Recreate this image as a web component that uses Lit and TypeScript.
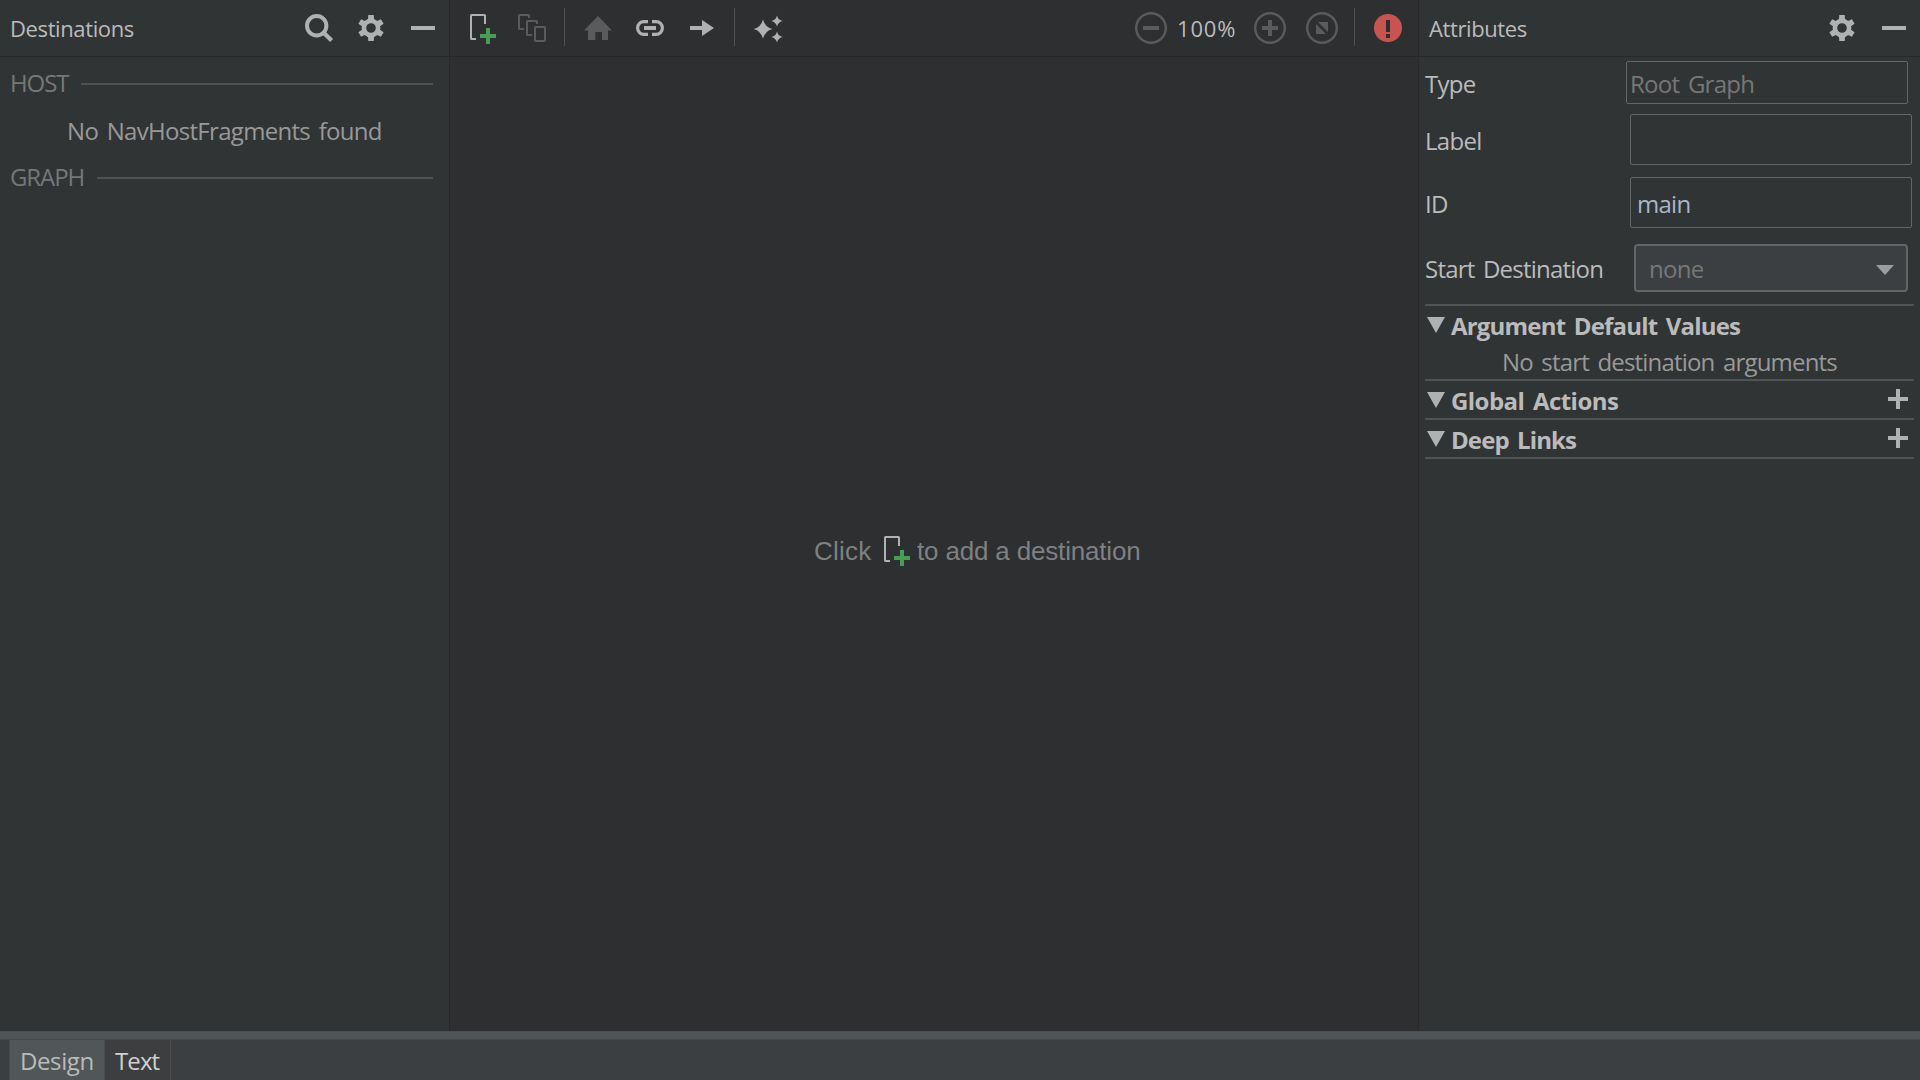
import { LitElement, html, css, svg, nothing } from "lit";
import { customElement, property } from "lit/decorators.js";

const ICON = "#afb1b3";
const DIM = "#5a5b5c";

const gearTeeth = [0, 60, 120, 180, 240, 300].map(
  (a) => svg`<path transform="rotate(${a} 16 16)" d="M12.8 9 L13.3 3 H18.7 L19.2 9 Z"/>`
);

const icons = {
  search: svg`<circle cx="13.7" cy="13.7" r="9.7" fill="none" stroke=${ICON} stroke-width="4"/>
    <path d="M19.7 19.7 L28.6 28.6" stroke=${ICON} stroke-width="4.2"/>`,
  gear: svg`<g fill=${ICON}>${gearTeeth}</g><circle cx="16" cy="16" r="7.1" fill="none" stroke=${ICON} stroke-width="4.6"/>`,
  minus: svg`<path d="M4 14h24v4H4z" fill=${ICON}/>`,
  add: svg`<path d="M8 27H3.6Q3 27 3 26.4V3.6Q3 3 3.6 3H16.4Q17 3 17 3.6V12" fill="none" stroke=${ICON} stroke-width="2"/>
    <path d="M18 16h4v6h6v4h-6v6h-4v-6h-6v-4h6z" fill="#499c54"/>`,
  nested: svg`<g fill="none" stroke=${DIM} stroke-width="2">
    <path d="M8 17H3.6Q3 17 3 16.4V3.6Q3 3 3.6 3H12.4Q13 3 13 3.6V6"/>
    <path d="M16 23H11.6Q11 23 11 22.4V9.6Q11 9 11.6 9H20.4Q21 9 21 9.6V12"/>
    <rect x="19" y="15" width="10" height="14" rx=".8"/></g>`,
  home: svg`<path d="M16 4 L30 18.4 H26 V28 H20 V20 H13.4 V28 H6 V18.4 H2 Z" fill=${DIM}/>`,
  link: svg`<path d="M14 9.6H10A6.4 6.4 0 0 0 10 22.4H14M18 9.6H22A6.4 6.4 0 0 1 22 22.4H18" fill="none" stroke=${ICON} stroke-width="3.2"/>
    <path d="M10 14h12v4H10z" fill=${ICON}/>`,
  arrow: svg`<path d="M4 14H16V8L28 16L16 24V18H4Z" fill=${ICON}/>`,
  sparkle: svg`<g fill=${ICON}>
    <path d="M11 7.400Q13 15 20.400 17Q13 19 11 26.600Q9 19 1.600 17Q9 15 11 7.400Z"/>
    <path d="M25 3.400Q26.100 7.900 30.600 9Q26.100 10.100 25 14.600Q23.900 10.100 19.400 9Q23.900 7.900 25 3.400Z"/>
    <path d="M25 19.400Q26.100 23.900 30.600 25Q26.100 26.100 25 30.600Q23.900 26.100 19.400 25Q23.900 23.900 25 19.400Z"/></g>`,
  zoomOut: svg`<circle cx="16" cy="16" r="14.8" fill="none" stroke=${DIM} stroke-width="2.400"/><path d="M8 14h16v4H8z" fill=${DIM}/>`,
  zoomIn: svg`<circle cx="16" cy="16" r="14.8" fill="none" stroke=${DIM} stroke-width="2.400"/><path d="M14 8h4v6h6v4h-6v6h-4v-6H8v-4h6z" fill=${DIM}/>`,
  zoomFit: svg`<circle cx="16" cy="16" r="14.8" fill="none" stroke=${DIM} stroke-width="2.400"/><path d="M12 10H22V20ZM10 12V22H20Z" fill=${DIM}/>`,
  error: svg`<circle cx="16" cy="16" r="14" fill="#c75450"/><path d="M14 8h4v12h-4zM14 22h4v4h-4z" fill="#2d2f31"/>`,
};
type IconName = keyof typeof icons;

@customElement("ui-icon")
class UiIcon extends LitElement {
  static styles = css`
    :host { display: block; flex: none; width: 32px; height: 32px; }
    svg { display: block; }
  `;
  @property() name: IconName = "minus";
  render() {
    return html`<svg width="32" height="32" viewBox="0 0 32 32">${icons[this.name]}</svg>`;
  }
}

@customElement("attribute-section")
class AttributeSection extends LitElement {
  static styles = css`
    :host { display: block; border-top: 2px solid #515253; margin: 0 6px 0 6px; }
    .head { display: flex; align-items: flex-start; height: 37px; padding: 0 6px 0 2px; }
    .tri { flex: none; display: block; margin-top: 11px; }
    .title {
      margin-left: 6px; margin-top: 1px; flex: 1; font-weight: 700; line-height: 37px;
      color: #bbbbbb; white-space: nowrap; word-spacing: 3px;
    }
    .arg { letter-spacing: -0.81px; }
    .actions { letter-spacing: -0.55px; }
    .links { letter-spacing: -0.9px; }
    .plus { flex: none; display: block; margin-top: 8px; }
    .note {
      height: 36px; line-height: 38px; padding-left: 77px; color: #999999;
      letter-spacing: -0.81px; word-spacing: 3px; white-space: nowrap;
    }
  `;
  @property() heading = "";
  @property() kind = "";
  @property() note = "";
  @property({ type: Boolean }) addable = false;
  render() {
    return html`
      <div class="head">
        <svg class="tri" width="18" height="16"><path d="M0 0H18L9 16Z" fill="#afb1b3"/></svg>
        <span class="title ${this.kind}">${this.heading}</span>
        ${this.addable
          ? html`<svg class="plus" width="20" height="20"><path d="M8 0h4v8h8v4h-8v8H8v-8H0V8h8z" fill="#afb1b3"/></svg>`
          : nothing}
      </div>
      ${this.note ? html`<div class="note">${this.note}</div>` : nothing}
    `;
  }
}

@customElement("app-root")
class AppRoot extends LitElement {
  static styles = css`
    :host {
      display: flex; flex-direction: column; width: 1920px; height: 1080px; overflow: hidden;
      background: #313435; color: #bbbbbb;
      font-family: "Open Sans", "Noto Sans", sans-serif; font-size: 24px; line-height: 32px;
    }
    * { box-sizing: border-box; }
    .main { display: flex; height: 1031px; }
    .side { flex: none; display: flex; flex-direction: column; background: #313435; }
    .left { width: 450px; border-right: 1px solid #282828; }
    .right { width: 502px; border-left: 1px solid #282828; }
    .center { flex: 1; display: flex; flex-direction: column; background: #2d2f31; }
    .header {
      flex: none; display: flex; align-items: center; height: 57px;
      border-bottom: 1px solid #282828; padding-right: 10px; gap: 20px; font-size: 22px;
    }
    .title { flex: 1; white-space: nowrap; letter-spacing: -0.39px; }
    .left .title { padding-left: 10px; }
    .right .title { padding-left: 10px; }

    .tree { display: flex; flex-direction: column; gap: 15px; padding: 10px 16px 0 9px; }
    .group { display: flex; align-items: center; height: 32px; color: #777777; }
    .rule { flex: 1; height: 2px; margin-top: 2px; background: #515151; }
    .host { width: 72px; letter-spacing: -1.1px; padding-left: 1px; }
    .graph { width: 88px; letter-spacing: -1.1px; padding-left: 1px; }
    .empty {
      height: 32px; line-height: 34px; padding-left: 58px; color: #999999;
      letter-spacing: -0.69px; word-spacing: 3px; white-space: nowrap;
    }

    .toolbar {
      flex: none; display: flex; align-items: center; height: 57px;
      border-bottom: 1px solid #282828; padding: 0 14px 0 18px;
    }
    .tools { display: flex; align-items: center; flex: 1; }
    .gap16 { margin-left: 16px; }
    .gap20 { margin-left: 20px; }
    .sep { flex: none; width: 1px; height: 38px; margin: 0 17px 3px 16px; background: #515151; }
    .percent { width: 87px; padding-left: 10px; font-size: 22px; letter-spacing: 0.8px; }

    .canvas { flex: 1; display: flex; align-items: flex-start; padding: 478px 0 0 364px; }
    .hint {
      display: flex; align-items: center; height: 32px; color: #7f8081; white-space: nowrap;
      font: 26px/32px "Liberation Sans", Arial, sans-serif;
    }
    .hint ui-icon { margin: -3px 0 0 9px; }
    .click { width: 59px; letter-spacing: 0.2px; }
    .rest { margin-left: 3px; letter-spacing: -0.17px; }

    .row { display: flex; align-items: center; padding-left: 6px; }
    .label { flex: none; padding-top: 2px; white-space: nowrap; letter-spacing: -0.72px; word-spacing: 3px; }
    .field {
      display: flex; align-items: center; width: 282px; border: 1px solid #646566; border-radius: 2px;
      letter-spacing: -0.72px; word-spacing: 3px; padding-top: 2px;
    }
    .type { margin-top: 4px; height: 43px; }
    .type .label { width: 201px; padding-top: 3px; }
    .type .field { height: 43px; padding: 3px 0 0 3px; color: #777777; }
    .lab { margin-top: 10px; height: 51px; }
    .lab .label, .id .label { width: 205px; }
    .lab .label { padding-top: 3px; }
    .lab .field { height: 51px; }
    .id { margin-top: 12px; height: 51px; }
    .id .field { height: 51px; padding-left: 6px; color: #a9b7c6; }
    .start { margin: 16px 0 12px; height: 48px; }
    .start .label { width: 209px; letter-spacing: -0.78px; }
    .combo {
      display: flex; align-items: center; justify-content: space-between; width: 274px; height: 48px;
      border: 2px solid #646566; border-radius: 4px; background: #3c3f41; color: #777777;
      padding: 2px 12px 0 13px; letter-spacing: -0.69px;
    }
    .caret { display: block; margin-top: 2px; }
    attribute-section:last-of-type { border-bottom: 2px solid #515253; }

    .divider {
      height: 9px; background: #515658; border-top: 1px solid #4a4e50; border-bottom: 1px solid #484b4d;
    }
    .tabs { display: flex; height: 40px; background: #3c3f41; padding-left: 9px; }
    .tab { height: 40px; line-height: 41px; border-right: 1px solid #4a4c4e; }
    .design { width: 96px; padding-left: 10px; background: #515658; border-left: 1px solid #484b4d; letter-spacing: -0.4px; }
    .text { width: 66px; padding-left: 10px; background: #3c3e3f; color: #d0d0d0; letter-spacing: -0.9px; }
  `;

  render() {
    return html`
      <div class="main">
        <div class="side left">
          <div class="header">
            <span class="title">Destinations</span>
            <ui-icon name="search"></ui-icon><ui-icon name="gear"></ui-icon><ui-icon name="minus"></ui-icon>
          </div>
          <div class="tree">
            <div class="group"><span class="host">HOST</span><span class="rule"></span></div>
            <div class="empty">No NavHostFragments found</div>
            <div class="group"><span class="graph">GRAPH</span><span class="rule"></span></div>
          </div>
        </div>

        <div class="center">
          <div class="toolbar">
            <div class="tools">
              <ui-icon name="add"></ui-icon>
              <ui-icon class="gap16" name="nested"></ui-icon>
              <span class="sep"></span>
              <ui-icon name="home"></ui-icon>
              <ui-icon class="gap20" name="link"></ui-icon>
              <ui-icon class="gap20" name="arrow"></ui-icon>
              <span class="sep"></span>
              <ui-icon name="sparkle"></ui-icon>
            </div>
            <ui-icon name="zoomOut"></ui-icon>
            <span class="percent">100%</span>
            <ui-icon name="zoomIn"></ui-icon>
            <ui-icon class="gap20" name="zoomFit"></ui-icon>
            <span class="sep"></span>
            <ui-icon name="error"></ui-icon>
          </div>
          <div class="canvas">
            <div class="hint">
              <span class="click">Click</span><ui-icon name="add"></ui-icon><span class="rest">to add a destination</span>
            </div>
          </div>
        </div>

        <div class="side right">
          <div class="header">
            <span class="title">Attributes</span>
            <ui-icon name="gear"></ui-icon><ui-icon name="minus"></ui-icon>
          </div>
          <div class="row type"><span class="label">Type</span><div class="field">Root Graph</div></div>
          <div class="row lab"><span class="label">Label</span><div class="field"></div></div>
          <div class="row id"><span class="label">ID</span><div class="field">main</div></div>
          <div class="row start">
            <span class="label">Start Destination</span>
            <div class="combo">none
              <svg class="caret" width="18" height="10"><path d="M0 0H18L9 10Z" fill="#9b9d9f"/></svg>
            </div>
          </div>
          <attribute-section kind="arg" heading="Argument Default Values" note="No start destination arguments"></attribute-section>
          <attribute-section kind="actions" heading="Global Actions" addable></attribute-section>
          <attribute-section kind="links" heading="Deep Links" addable></attribute-section>
        </div>
      </div>
      <div class="divider"></div>
      <div class="tabs">
        <div class="tab design">Design</div>
        <div class="tab text">Text</div>
      </div>
    `;
  }
}
